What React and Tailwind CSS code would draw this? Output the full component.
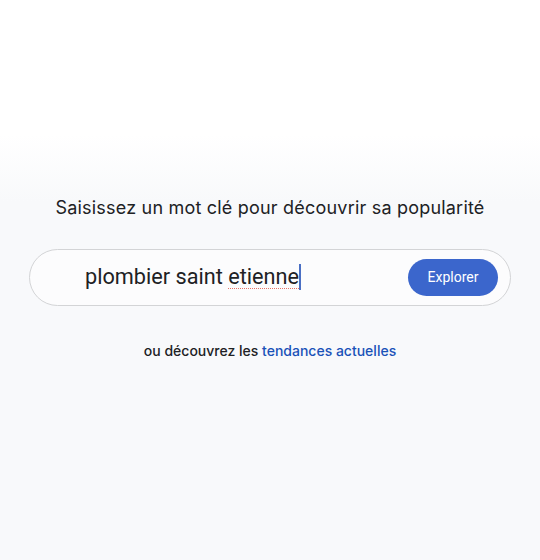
export default function App() {
    return (
        <div
            className="min-h-[560px] w-full flex flex-col items-center bg-[linear-gradient(to_bottom,#ffffff_0%,#ffffff_24%,#f8f9fb_36%,#f8f9fb_100%)]"
            style={{ fontFamily: 'Roboto, "Open Sans", sans-serif' }}
        >
            <h1 className="mt-[194px] text-[18px] leading-[28px] tracking-[0.2px] text-[#202124] font-normal font-['Inter',sans-serif]">
                Saisissez un mot clé pour découvrir sa popularité
            </h1>

            <div className="mt-[27px] w-[482px] h-[57px] rounded-full border border-[#d3d4d6] bg-[#fcfcfd] flex items-center pl-[55px] pr-[12px]">
                <div className="flex-1 flex items-center text-[21.7px] text-[#202124]">
                    <span>
                        plombier saint{' '}
                        <span className="underline decoration-dotted decoration-[#e57368] decoration-1 underline-offset-[4px]">etienne</span>
                    </span>
                    <span className="w-[2px] h-[26px] bg-[#4a6fc4]"></span>
                </div>
                <button className="w-[90px] h-[37px] rounded-full bg-[#3b66cc] text-white text-[14px]">
                    Explorer
                </button>
            </div>

            <p className="mt-[35px] text-[14px] leading-[20px] font-medium text-[#202124] font-['Inter',sans-serif]">
                ou découvrez les <a href="#" className="text-[#1a52b8]">tendances actuelles</a>
            </p>
        </div>
    );
}
